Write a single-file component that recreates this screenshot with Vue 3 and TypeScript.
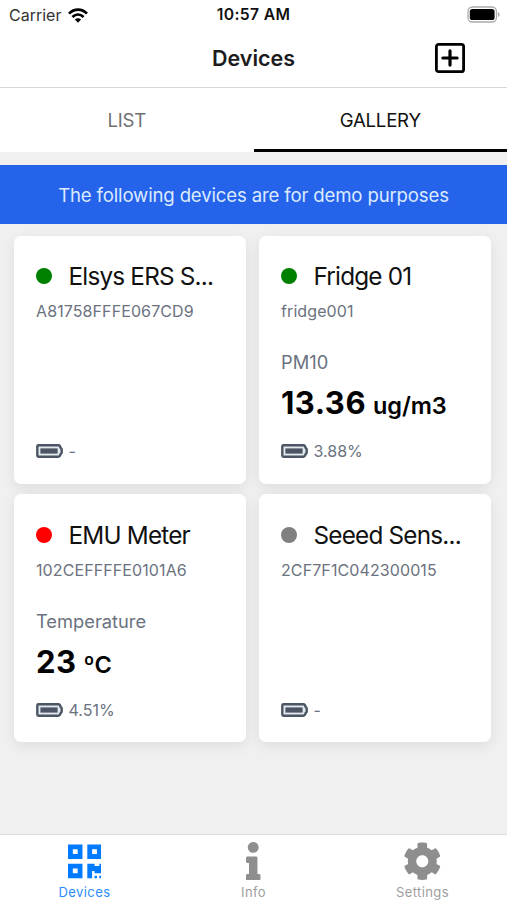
<script setup lang="ts">
interface Device {
  name: string
  id: string
  status: 'online' | 'offline' | 'unknown'
  label?: string
  value?: string
  unit?: string
  battery: string
}

const devices: Device[] = [
  { name: 'Elsys ERS S...', id: 'A81758FFFE067CD9', status: 'online', battery: '-' },
  { name: 'Fridge 01', id: 'fridge001', status: 'online', label: 'PM10', value: '13.36', unit: 'ug/m3', battery: '3.88%' },
  { name: 'EMU Meter', id: '102CEFFFFE0101A6', status: 'offline', label: 'Temperature', value: '23', unit: 'ºC', battery: '4.51%' },
  { name: 'Seeed Sens...', id: '2CF7F1C042300015', status: 'unknown', battery: '-' },
]

const navItems = [
  {
    title: 'Devices',
    active: true,
    box: '0 0 448 512',
    path: 'M0 224h192V32H0v192zM64 96h64v64H64V96zm192-64v192h192V32H256zm128 128h-64V96h64v64zM0 480h192V288H0v192zm64-128h64v64H64v-64zm352-64h32v128h-96v-32h-32v96h-64V288h96v32h64v-32zm0 160h32v32h-32v-32zm-64 0h32v32h-32v-32z',
  },
  {
    title: 'Info',
    active: false,
    box: '0 0 192 512',
    path: 'M20 424.229h20V279.771H20c-11.046 0-20-8.954-20-20V212c0-11.046 8.954-20 20-20h112c11.046 0 20 8.954 20 20v212.229h20c11.046 0 20 8.954 20 20V492c0 11.046-8.954 20-20 20H20c-11.046 0-20-8.954-20-20v-47.771c0-11.046 8.954-20 20-20zM96 0C56.235 0 24 32.235 24 72s32.235 72 72 72 72-32.235 72-72S135.764 0 96 0z',
  },
  {
    title: 'Settings',
    active: false,
    box: '0 0 512 512',
    path: 'M487.4 315.7l-42.6-24.6c4.3-23.2 4.3-47 0-70.2l42.6-24.6c4.9-2.8 7.1-8.6 5.5-14-11.1-35.6-30-67.8-54.7-94.6-3.8-4.1-10-5.1-14.8-2.3L380.8 110c-17.9-15.4-38.5-27.3-60.8-35.1V25.8c0-5.6-3.9-10.5-9.4-11.7-36.7-8.2-74.3-7.8-109.2 0-5.5 1.2-9.4 6.1-9.4 11.7V75c-22.2 7.9-42.8 19.8-60.8 35.1L88.7 85.5c-4.9-2.8-11-1.9-14.8 2.3-24.7 26.7-43.6 58.9-54.7 94.6-1.7 5.4.6 11.2 5.5 14L67.3 221c-4.3 23.2-4.3 47 0 70.2l-42.6 24.6c-4.9 2.8-7.1 8.6-5.5 14 11.1 35.6 30 67.8 54.7 94.6 3.8 4.1 10 5.1 14.8 2.3l42.6-24.6c17.9 15.4 38.5 27.3 60.8 35.1v49.2c0 5.6 3.9 10.5 9.4 11.7 36.7 8.2 74.3 7.8 109.2 0 5.5-1.2 9.4-6.1 9.4-11.7v-49.2c22.2-7.9 42.8-19.8 60.8-35.1l42.6 24.6c4.9 2.8 11 1.9 14.8-2.3 24.7-26.7 43.6-58.9 54.7-94.6 1.5-5.5-.7-11.3-5.6-14.1zM256 336c-44.1 0-80-35.9-80-80s35.9-80 80-80 80 35.9 80 80-35.9 80-80 80z',
  },
]
</script>

<template>
  <div class="app">
    <div class="status-bar">
      <div class="carrier">
        <span>Carrier</span>
        <svg class="wifi" viewBox="0 0 20 15" fill="none" stroke="#000" stroke-width="2.7">
          <path d="M1 5.6C6.2.4 13.8.4 19 5.6" />
          <path d="M4.4 9C7.7 5.8 12.3 5.8 15.6 9" />
          <path d="M6.9 11.5C8.6 9.9 11.4 9.9 13.1 11.5L10 14.7Z" fill="#000" stroke="none" />
        </svg>
      </div>
      <span class="time">10:57 AM</span>
      <div class="power">
        <svg width="33" height="17" viewBox="0 0 33 17">
          <rect x="1" y="1" width="28.5" height="15" rx="4.5" fill="#fff" stroke="#aaa" stroke-width="1.3" />
          <rect x="2.8" y="2.9" width="24.8" height="11.2" rx="2.6" fill="#000" />
          <path d="M31 6v5q1.6-.8 1.6-2.5T31 6z" fill="#aaa" />
        </svg>
      </div>
    </div>

    <header class="header">
      <span></span>
      <h1>Devices</h1>
      <button class="add" aria-label="Add device">
        <svg width="30" height="30" viewBox="0 0 30 30" fill="none" stroke="#000">
          <rect x="1.4" y="1.4" width="27.2" height="27.2" rx="2.2" stroke-width="2.8" />
          <path d="M15 7.9v14.2M7.9 15h14.2" stroke-width="3.2" stroke-linecap="round" />
        </svg>
      </button>
    </header>

    <div class="tabs">
      <div class="tab list">LIST</div>
      <div class="tab selected">GALLERY</div>
    </div>

    <div class="banner">The following devices are for demo purposes</div>

    <main class="gallery">
      <article v-for="device in devices" :key="device.id" class="card">
        <div class="heading">
          <i class="dot" :class="device.status"></i>
          <h2>{{ device.name }}</h2>
        </div>
        <div class="device-id">{{ device.id }}</div>
        <div v-if="device.label" class="reading">
          <div class="label">{{ device.label }}</div>
          <div class="value">{{ device.value }}<span class="unit">{{ device.unit }}</span></div>
        </div>
        <div class="battery">
          <svg width="27" height="14" viewBox="0 0 27 14">
            <path d="M2.5 1.3H22.2Q24.2 1.5 24.4 3.5L25.7 5.2v3.6l-1.3 1.7Q24.2 12.5 22.2 12.7H2.5Q1.3 12.7 1.3 11.5V2.5Q1.3 1.3 2.5 1.3z" fill="#e3e8ef" stroke="#4b5563" stroke-width="2.4" stroke-linejoin="round" />
            <rect x="4.4" y="4.4" width="17.2" height="5.2" fill="#4b5563" />
          </svg>
          <span>{{ device.battery }}</span>
        </div>
      </article>
    </main>

    <nav class="bottom-nav">
      <div v-for="item in navItems" :key="item.title" class="nav-item" :class="{ active: item.active }">
        <svg height="38.6" :viewBox="item.box" fill="currentColor"><path :d="item.path" /></svg>
        <span>{{ item.title }}</span>
      </div>
    </nav>
  </div>
</template>

<style>
body {
  margin: 0;
  background: #f0f0f0;
}
</style>

<style scoped>
.app {
  width: 507px;
  height: 900px;
  display: flex;
  flex-direction: column;
  overflow: hidden;
  background: #f0f0f0;
  font-family: Inter, "Liberation Sans", sans-serif;
  color: #111;
}
.status-bar {
  height: 29px;
  flex: none;
  display: grid;
  grid-template-columns: 1fr auto 1fr;
  background: #fff;
  font-size: 16px;
  line-height: 30px;
}
.carrier {
  display: flex;
  align-items: center;
  gap: 7px;
  padding-left: 9px;
  color: #333;
}
.wifi {
  width: 20px;
  height: 15px;
}
.time {
  font-weight: 600;
  font-size: 15.7px;
  letter-spacing: 0.35px;
}
.power {
  display: flex;
  justify-content: flex-end;
  padding: 5.5px 7px 0 0;
}
.header {
  height: 58px;
  flex: none;
  display: grid;
  grid-template-columns: 1fr auto 1fr;
  align-items: center;
  background: #fff;
  border-bottom: 1px solid #d8d8da;
}
h1 {
  margin: 0;
  font-size: 21.5px;
  font-weight: 600;
  line-height: 56px;
  color: #1c1c1e;
}
.add {
  justify-self: end;
  display: flex;
  margin: 0 42px 0 0;
  padding: 0;
  border: 0;
  background: none;
}
.tabs {
  height: 64px;
  flex: none;
  display: grid;
  grid-template-columns: 1fr 1fr;
  background: #fff;
  font-size: 18.6px;
  letter-spacing: -0.2px;
  text-align: center;
}
.tab {
  box-sizing: border-box;
  height: 64px;
  line-height: 64px;
}
.list {
  color: #707070;
}
.selected {
  border-bottom: 3px solid #000;
}
.banner {
  height: 59px;
  flex: none;
  margin-top: 13px;
  background: #2563eb;
  color: #dbeafe;
  font-size: 18.6px;
  letter-spacing: -0.16px;
  line-height: 60px;
  text-align: center;
}
.gallery {
  flex: 1;
  display: grid;
  grid-template-columns: 231.5px 231.5px;
  grid-auto-rows: 248px;
  gap: 10.6px 13.5px;
  padding: 11.8px 0 0 14px;
}
.card {
  box-sizing: border-box;
  display: flex;
  flex-direction: column;
  padding: 22.2px 18px 22.5px 22px;
  border-radius: 7px;
  background: #fff;
  box-shadow: 0 4px 14px rgba(0, 0, 0, 0.08);
  white-space: nowrap;
}
.heading {
  display: flex;
  align-items: center;
  gap: 16.5px;
  height: 36px;
}
.dot {
  width: 16px;
  height: 16px;
  flex: none;
  border-radius: 50%;
}
.online {
  background: #008000;
}
.offline {
  background: #f00;
}
.unknown {
  background: #808080;
}
h2 {
  margin: 0;
  font-size: 24.3px;
  font-weight: 400;
  letter-spacing: -0.8px;
  line-height: 36px;
}
.device-id {
  height: 34px;
  font-size: 16px;
  letter-spacing: 0.1px;
  line-height: 34px;
  color: #6b7280;
}
.reading {
  padding-top: 20px;
}
.label {
  font-size: 18.3px;
  line-height: 28px;
  color: #6b7280;
}
.value {
  font-size: 31px;
  font-weight: 700;
  letter-spacing: 0.5px;
  line-height: 54px;
  color: #000;
}
.unit {
  margin-left: 7px;
  font-size: 23.5px;
  font-weight: 600;
  letter-spacing: -0.1px;
}
.battery {
  display: flex;
  align-items: center;
  gap: 5.5px;
  height: 20px;
  margin-top: auto;
  font-size: 16px;
  line-height: 20px;
  color: #6b7280;
}
.bottom-nav {
  height: 66px;
  flex: none;
  box-sizing: border-box;
  display: grid;
  grid-template-columns: repeat(3, 1fr);
  border-top: 1px solid #dcdcde;
  background: #fff;
}
.nav-item {
  display: flex;
  flex-direction: column;
  align-items: center;
  gap: 1.6px;
  padding-top: 6.6px;
  color: #8e8e8f;
  font-size: 13px;
  letter-spacing: 0.4px;
  line-height: 20px;
}
.nav-item.active {
  color: #007aff;
}
.nav-item span {
  opacity: 0.85;
}
</style>
